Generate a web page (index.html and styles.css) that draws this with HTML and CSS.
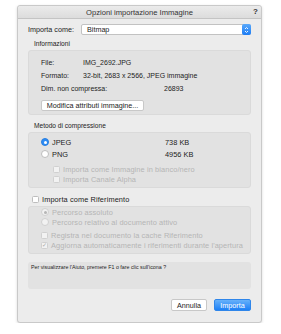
FILE: index.html
```html
<!DOCTYPE html>
<html lang="it">
<head>
    <meta charset="UTF-8">
    <title>Opzioni importazione Immagine</title>
    <link rel="stylesheet" href="styles.css">
</head>
<body>
    <div class="dialog">
        <div class="titlebar">
            <span class="title">Opzioni importazione Immagine</span>
            <span class="help">?</span>
        </div>
        <div class="content">
            <!-- Tipo di importazione -->
            <div class="import-row">
                <span class="import-label">Importa come:</span>
                <div class="select">
                    <span>Bitmap</span>
                    <span class="stepper">
                        <svg width="5" height="8" viewBox="0 0 5 8"><path d="M1 3 L2.5 1.5 L4 3 M1 5 L2.5 6.5 L4 5" fill="none" stroke="#fff" stroke-width="0.9"/></svg>
                    </span>
                </div>
            </div>

            <!-- Informazioni -->
            <div class="group-title">Informazioni</div>
            <div class="group info">
                <div class="info-row"><span class="info-label">File:</span><span>IMG_2692.JPG</span></div>
                <div class="info-row"><span class="info-label">Formato:</span><span>32-bit, 2683 x 2566, JPEG immagine</span></div>
                <div class="info-row"><span class="info-label wide">Dim. non compressa:</span><span>26893</span></div>
                <button class="btn small">Modifica attributi immagine...</button>
            </div>

            <!-- Metodo di compressione -->
            <div class="group-title second">Metodo di compressione</div>
            <div class="group compress">
                <div class="radio-row"><span class="radio on"></span><span class="radio-name">JPEG</span><span>738 KB</span></div>
                <div class="radio-row"><span class="radio"></span><span class="radio-name">PNG</span><span>4956 KB</span></div>
                <div class="check-row disabled indent first"><span class="check"></span>Importa come Immagine in bianco/nero</div>
                <div class="check-row disabled indent"><span class="check"></span>Importa Canale Alpha</div>
            </div>

            <!-- Riferimento -->
            <div class="check-row ref"><span class="check"></span>Importa come Riferimento</div>
            <div class="group reference">
                <div class="radio-row disabled small-row"><span class="radio dis-on"></span>Percorso assoluto</div>
                <div class="radio-row disabled small-row"><span class="radio"></span>Percorso relativo al documento attivo</div>
                <div class="check-row disabled first-ref"><span class="check"></span>Registra nel documento la cache Riferimento</div>
                <div class="check-row disabled"><span class="check checked">&#10003;</span>Aggiorna automaticamente i riferimenti durante l'apertura</div>
            </div>

            <div class="helpbox">Per visualizzare l'Aiuto, premere F1 o fare clic sull'icona ?</div>

            <div class="buttons">
                <button class="btn">Annulla</button>
                <button class="btn primary">Importa</button>
            </div>
        </div>
    </div>
</body>
</html>
```

FILE: styles.css
```css
body {
    margin: 0;
    padding: 0;
    background-color: #ffffff;
    font-family: "Liberation Sans", Arial, sans-serif;
    font-size: 7px;
    color: #222;
}
.dialog {
    box-sizing: border-box;
    margin: 5px 0 0 17px;
    width: 245px;
    height: 318px;
    background-color: #ececec;
    border: 1px solid #c9c9c9;
    border-radius: 3px;
    box-shadow: 0px 1px 3px rgba(0, 0, 0, 0.15);
    display: flex;
    flex-direction: column;
}
.titlebar {
    height: 12px;
    background: linear-gradient(#ebebeb, #dcdcdc);
    border-bottom: 1px solid #c4c4c4;
    border-radius: 3px 3px 0 0;
    display: flex;
    align-items: center;
    justify-content: center;
    position: relative;
}
.title {
    font-size: 7.6px;
    color: #333;
}
.help {
    position: absolute;
    right: 3px;
    top: 1px;
    font-weight: bold;
    font-size: 8px;
    color: #333;
}
.content {
    padding: 0 10px;
    display: flex;
    flex-direction: column;
}
.import-row {
    display: flex;
    align-items: center;
    margin-top: 5px;
    height: 11px;
}
.import-label {
    width: 53px;
    font-size: 7.2px;
}
.select {
    box-sizing: border-box;
    flex: 1;
    height: 11px;
    background-color: #fff;
    border: 1px solid #c2c2c2;
    border-radius: 2px;
    display: flex;
    align-items: center;
    justify-content: space-between;
    padding-left: 5px;
    font-size: 7.2px;
}
.stepper {
    width: 9px;
    height: 11px;
    margin-right: -1px;
    background: linear-gradient(#5aa9fb, #1c7cf4);
    border-radius: 2px;
    display: flex;
    align-items: center;
    justify-content: center;
}
.group-title {
    margin: 5px 0 2px 6px;
    height: 8px;
    line-height: 8px;
    font-size: 6.6px;
}
.group-title.second {
    margin-top: 7px;
}
.group {
    background-color: #e2e2e2;
    border-radius: 3px;
    border: 1px solid #dadada;
    box-sizing: border-box;
}
.info {
    height: 65px;
    padding: 5px 12px 0;
}
.info-row {
    display: flex;
    height: 13px;
    line-height: 13px;
}
.info-label {
    width: 42px;
}
.info-label.wide {
    width: 123px;
}
.btn {
    font-family: "Liberation Sans", Arial, sans-serif;
    font-size: 7.2px;
    background-color: #fff;
    border: 1px solid #c8c8c8;
    border-radius: 2px;
    padding: 0;
    height: 11px;
    line-height: 9px;
    color: #222;
}
.btn.small {
    margin-top: 5px;
    width: 103px;
}
.compress {
    height: 56px;
    padding: 3px 12px 0;
}
.radio-row {
    display: flex;
    align-items: center;
    height: 12px;
    font-size: 7.4px;
    white-space: nowrap;
}
.radio {
    box-sizing: border-box;
    width: 8px;
    height: 8px;
    border-radius: 50%;
    background-color: #fff;
    border: 1px solid #bdbdbd;
    margin-right: 3px;
    flex-shrink: 0;
}
.radio.on {
    background-color: #2d8cf5;
    border-color: #2a7fe0;
    display: flex;
    align-items: center;
    justify-content: center;
}
.radio.on::after {
    content: "";
    width: 3px;
    height: 3px;
    border-radius: 50%;
    background-color: #fff;
}
.radio.dis-on {
    display: flex;
    align-items: center;
    justify-content: center;
    border-color: #cdcdcd;
}
.radio.dis-on::after {
    content: "";
    width: 3px;
    height: 3px;
    border-radius: 50%;
    background-color: #b5b5b5;
}
.radio-name {
    width: 113px;
}
.check-row {
    display: flex;
    align-items: center;
    height: 10px;
    font-size: 7.4px;
    letter-spacing: 0.1px;
    white-space: nowrap;
}
.check {
    box-sizing: border-box;
    width: 7px;
    height: 7px;
    border: 1px solid #bdbdbd;
    border-radius: 1.5px;
    background-color: #fff;
    margin-right: 3px;
    flex-shrink: 0;
    font-size: 6px;
    line-height: 5px;
    text-align: center;
    color: #a8a8a8;
}
.disabled {
    color: #b5b5b5;
}
.reference .radio-row {
    font-size: 7.4px;
    letter-spacing: 0.1px;
}
.disabled .check,
.disabled .radio {
    border-color: #d0d0d0;
    background-color: #f2f2f2;
}
.indent {
    padding-left: 12px;
}
.check-row.first {
    margin-top: 4px;
}
.check-row.ref {
    margin: 7px 0 3px 4px;
    height: 8px;
    font-size: 7.4px;
}
.reference {
    height: 48px;
    padding: 0 12px;
}
.small-row {
    height: 10px;
}
.check-row.first-ref {
    margin-top: 3px;
}
.helpbox {
    margin-top: 8px;
    height: 27px;
    background-color: #e2e2e2;
    border-radius: 3px;
    padding: 2px 3px;
    box-sizing: border-box;
    font-size: 5.3px;
}
.buttons {
    display: flex;
    justify-content: flex-end;
    gap: 7px;
    margin-top: 10px;
}
.buttons .btn {
    width: 36px;
    height: 12px;
}
.btn.primary {
    width: 37px;
    background: linear-gradient(#67b1fa, #1d80f6);
    border-color: #2f86ea;
    color: #fff;
}
```
